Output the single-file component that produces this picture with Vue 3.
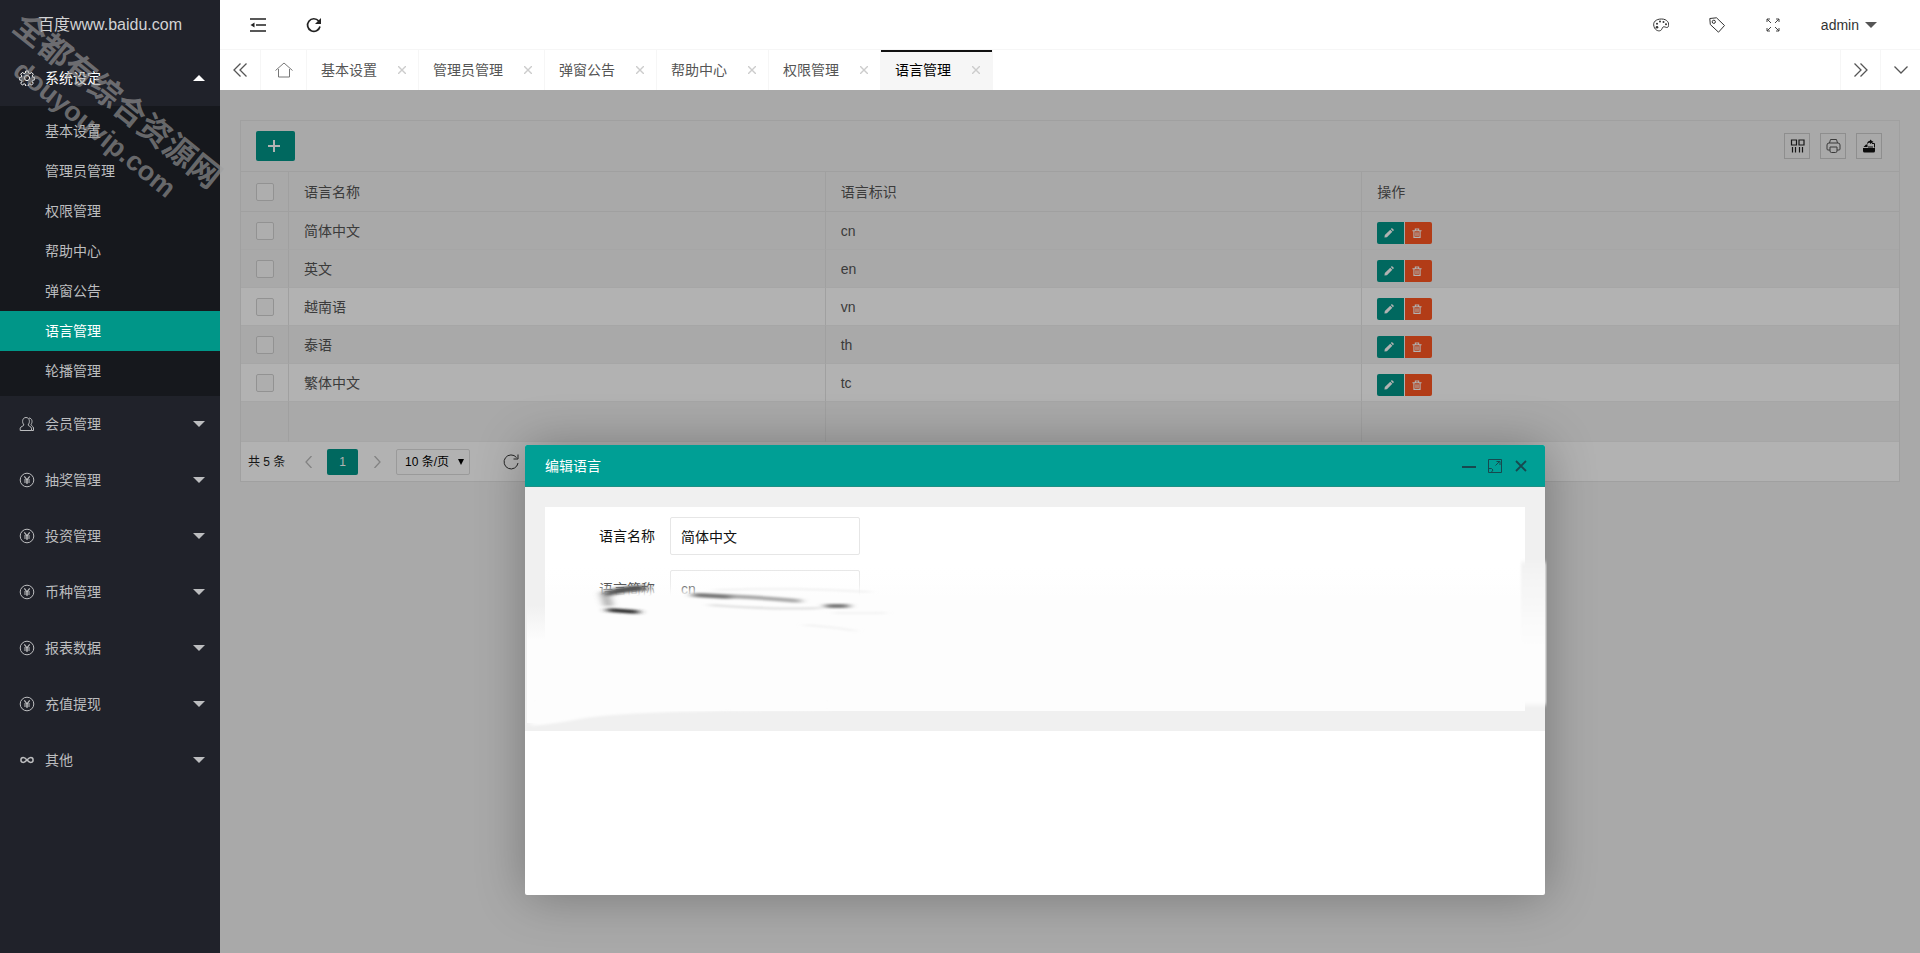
<script setup>
import { ref } from 'vue'

const subMenu = ['基本设置', '管理员管理', '权限管理', '帮助中心', '弹窗公告', '语言管理', '轮播管理']
const groups = [
  { name: '会员管理', icon: 'user' },
  { name: '抽奖管理', icon: 'yen' },
  { name: '投资管理', icon: 'yen' },
  { name: '币种管理', icon: 'yen' },
  { name: '报表数据', icon: 'yen' },
  { name: '充值提现', icon: 'yen' },
  { name: '其他', icon: 'link' },
]
const tabs = ['基本设置', '管理员管理', '弹窗公告', '帮助中心', '权限管理', '语言管理']
const rows = [
  { name: '简体中文', code: 'cn', shaded: true },
  { name: '英文', code: 'en', shaded: true },
  { name: '越南语', code: 'vn', shaded: false },
  { name: '泰语', code: 'th', shaded: true },
  { name: '繁体中文', code: 'tc', shaded: false },
]
const current = '语言管理'
const form = ref({ name: '简体中文', code: 'cn' })
</script>

<template>
  <div class="app">
    <aside class="side">
      <div class="logo">百度www.baidu.com</div>
      <nav>
        <a href="#" class="group open">
          <svg class="gicon" viewBox="0 0 16 16" fill="none" stroke="currentColor">
            <circle cx="8" cy="8" r="2.6" />
            <path d="M6.8 1h2.4l.4 2 1.3.6 1.8-1.1 1.6 1.7-1.1 1.7.5 1.3 2 .4v2.2l-2 .5-.5 1.3 1.1 1.7-1.6 1.6-1.8-1.1-1.3.5-.4 2H6.8l-.4-2-1.3-.5-1.8 1.1-1.6-1.6 1.1-1.7-.5-1.3-2-.5V7.6l2-.4.5-1.3-1.1-1.7 1.6-1.7 1.8 1.1L6.400 3z" />
          </svg>
          <span>系统设定</span><i class="caret up"></i>
        </a>
        <div class="sub">
          <a v-for="s in subMenu" :key="s" href="#" :class="{ on: s === current }">{{ s }}</a>
        </div>
        <a v-for="g in groups" :key="g.name" href="#" class="group">
          <svg v-if="g.icon === 'user'" class="gicon" viewBox="0 0 16 16" fill="none" stroke="currentColor">
            <path d="M5 9C2.700 6.500 3.200 1.500 7 1.500S11.300 6.500 9 9c.2 1 3.300 1.500 3.500 3.200V14.500H1.200v-2.300C1.500 10.500 4.800 10 5 9z" />
            <path d="M10 2c3.300.2 3.800 4 2 6.700.3 1.200 2.300 1.500 2.500 3.300v2.500h-2" />
          </svg>
          <svg v-else-if="g.icon === 'yen'" class="gicon" viewBox="0 0 16 16" fill="none" stroke="currentColor">
            <circle cx="8" cy="8" r="6.800" />
            <path stroke-width="1.200" d="M5.300 4.300L8 7.800l2.700-3.500M8 7.800V12M5 8h6M5 10h6" />
          </svg>
          <svg v-else class="gicon" viewBox="0 0 16 16" fill="none" stroke="currentColor" stroke-width="1.500">
            <path d="M8 8C6.300 6 5.300 5.600 4.300 5.600a2.400 2.400 0 0 0 0 4.800c1.200 0 2.300-.9 3.700-2.400s2.400-2.400 3.700-2.400a2.400 2.400 0 0 1 0 4.800C10.600 10.400 9.700 10 8 8z" />
          </svg>
          <span>{{ g.name }}</span><i class="caret"></i>
        </a>
      </nav>
      <div class="mark"><span class="mark-cn">全都有综合资源网</span><span class="mark-url">douyouvip.com</span></div>
    </aside>

    <div class="main">
      <header class="top">
        <button class="nav-btn" aria-label="收起菜单">
          <svg viewBox="0 0 16 16" fill="none" stroke="#222" stroke-width="1.500">
            <path d="M0 2h16M6 8h10M0 14h16" /><path d="M4.500 5.500v5L.5 8z" fill="#222" stroke="none" />
          </svg>
        </button>
        <button class="nav-btn" aria-label="刷新">
          <svg viewBox="0 0 16 16" fill="none" stroke="#222" stroke-width="1.700">
            <path d="M14 9.500A6.300 6.300 0 1 1 12.700 4" /><path d="M15 1v6H9z" fill="#222" stroke="none" />
          </svg>
        </button>
        <span class="grow"></span>
        <button class="nav-btn" aria-label="主题">
          <svg viewBox="0 0 16 16" fill="none" stroke="#333">
            <path d="M1 9.500C-.5 5 3 2 8.500 2S17 6 15.200 9.800c-1 1.500-2.500.2-4 0-2-.2-1.700 1.500-2.700 2.900C6.500 15.200 2 13.500 1 9.500z" />
            <g fill="#333" stroke="none"><circle cx="4" cy="10.300" r="1.300" /><circle cx="4" cy="6.800" r="1" /><circle cx="7" cy="4.600" r="1" /><circle cx="10.500" cy="5" r="1" /><circle cx="13" cy="7.200" r="1" /></g>
          </svg>
        </button>
        <button class="nav-btn" aria-label="便签">
          <svg viewBox="0 0 16 16" fill="none" stroke="#333">
            <path d="M.8 1.500L7.500.8l8 7.700-6 6.700L1.300 7.500z" /><circle cx="4.800" cy="4.800" r="1.600" />
          </svg>
        </button>
        <button class="nav-btn" aria-label="全屏">
          <svg viewBox="0 0 16 16" fill="none" stroke="#444">
            <path d="M6 6L2 2M10 6l4-4M6 10l-4 4M10 10l4 4M2 5V2h3M11 2h3v3M2 11v3h3M14 11v3h-3" />
          </svg>
        </button>
        <button class="user">admin<i class="caret"></i></button>
      </header>

      <div class="tabs">
        <button class="ctl" aria-label="向左">
          <svg viewBox="0 0 16 16" fill="none" stroke="#555" stroke-width="1.300"><path d="M8.500 1.500L2 8l6.500 6.500M14.500 1.500L8 8l6.500 6.500" /></svg>
        </button>
        <button class="home" aria-label="主页">
          <svg viewBox="0 0 18 16" fill="none" stroke="#777"><path d="M.5 8.500L9 1l8.500 7.500M3.500 7v8h11V7" /></svg>
        </button>
        <div v-for="t in tabs" :key="t" class="tab" :class="{ on: t === current }">
          <a href="#">{{ t }}</a>
          <button :aria-label="'关闭' + t"><svg viewBox="0 0 8 8" fill="none" stroke="#ccc" stroke-width="1.400"><path d="M0 0l8 8M8 0L0 8" /></svg></button>
        </div>
        <span class="grow"></span>
        <button class="ctl r" aria-label="向右">
          <svg viewBox="0 0 16 16" fill="none" stroke="#555" stroke-width="1.300"><path d="M1.500 1.500L8 8l-6.500 6.500M7.500 1.500L14 8l-6.500 6.500" /></svg>
        </button>
        <button class="ctl r" aria-label="更多">
          <svg viewBox="0 0 16 16" fill="none" stroke="#555" stroke-width="1.300"><path d="M1.500 4.500L8 11l6.500-6.500" /></svg>
        </button>
      </div>

      <main class="body">
        <section class="card">
          <div class="bar">
            <button class="add" aria-label="添加">
              <svg viewBox="0 0 12 12" stroke="#fff" stroke-width="2"><path d="M6 0v12M0 6h12" /></svg>
            </button>
            <span class="grow"></span>
            <button class="tool" aria-label="筛选列">
              <svg viewBox="0 0 16 16" fill="none" stroke="#222" stroke-width="1.200"><path d="M2.500 2h5v5h-5zM10 2h5v5h-5zM3.500 9v5.500M6.500 9v5.500M10.500 9v5.500M13.500 9v5.500" /></svg>
            </button>
            <button class="tool" aria-label="打印">
              <svg viewBox="0 0 16 16" fill="none" stroke="#555"><path d="M4.500 5l1-3.500h6l1 3.500M5 12H3q-1 0-1-1V7q0-2 2-2h9q2 0 2 2v4q0 1-1 1h-2M5 9h7v4q0 1.500-1.500 1.500h-4Q5 14.500 5 13z" /></svg>
            </button>
            <button class="tool" aria-label="导出">
              <svg viewBox="0 0 16 16"><path d="M2 10h12v3q0 1.500-1.500 1.500h-9Q2 14.500 2 13zM2.500 9L5 6.500h1.500V9zM9 1.500L12.500 4 9 6V4.800C8 4.800 7 5 6 6.500 6 4 7.500 2.800 9 2.800z" fill="#111" /><path d="M13.500 9.500V5.500h-2.500M7 9h5" fill="none" stroke="#111" /></svg>
            </button>
          </div>

          <table>
            <colgroup><col class="ck"><col><col><col></colgroup>
            <thead>
              <tr>
                <th><input type="checkbox" aria-label="全选"></th>
                <th>语言名称</th><th>语言标识</th><th>操作</th>
              </tr>
            </thead>
            <tbody>
              <tr v-for="r in rows" :key="r.code" :class="{ shaded: r.shaded }">
                <td><input type="checkbox" :aria-label="'选择' + r.name"></td>
                <td>{{ r.name }}</td>
                <td>{{ r.code }}</td>
                <td>
                  <div class="acts">
                    <button class="edit" aria-label="编辑"><svg viewBox="0 0 12 12"><path d="M.5 11.500l.5-3L7.500 2 10 4.500 3.500 11zM8.200 1.300L9.500 0 12 2.500l-1.300 1.300z" fill="#fff" /></svg></button>
                    <button class="del" aria-label="删除"><svg viewBox="0 0 12 12" fill="none" stroke="#fff" stroke-width="1.300"><path d="M.5 3.200h11M4 3V1.200h4V3M2.300 3.500v7.700h7.400V3.500M4.800 5v4.500M7.200 5v4.500" /></svg></button>
                  </div>
                </td>
              </tr>
              <tr class="shaded blank"><td></td><td></td><td></td><td></td></tr>
            </tbody>
          </table>

          <div class="pager">
            <span class="total">共 5 条</span>
            <button class="pg" aria-label="上一页"><svg viewBox="0 0 12 12" fill="none" stroke="#bbb" stroke-width="1.300"><path d="M8.500 0L3 6l5.500 6" /></svg></button>
            <button class="pg cur">1</button>
            <button class="pg" aria-label="下一页"><svg viewBox="0 0 12 12" fill="none" stroke="#bbb" stroke-width="1.300"><path d="M3.500 0L9 6l-5.500 6" /></svg></button>
            <div class="size">
              <select aria-label="每页条数"><option>10 条/页</option></select>
              <i></i>
            </div>
            <button class="reload" aria-label="刷新列表"><svg viewBox="0 0 16 16" fill="none" stroke="#333"><path d="M15 9A7 7 0 1 1 13.500 3.500M15 .5V5h-4.500" /></svg></button>
          </div>
        </section>

        <div class="shade"></div>

        <div class="dialog" role="dialog" aria-label="编辑语言">
          <div class="dhead">
            <span>编辑语言</span>
            <button aria-label="最小化"><svg viewBox="0 0 14 14"><path d="M0 8h14" stroke-width="2" /></svg></button>
            <button aria-label="最大化"><svg viewBox="0 0 14 14" fill="none"><path d="M7 .5H.5V7M.5 13.500h13V.5H7M7.500 6.500L12 2M8.500 2.500H12V6M.5 7v6.500M1 9.500h2.500L5 11l-1.500 2" /></svg></button>
            <button aria-label="关闭"><svg viewBox="0 0 14 14"><path d="M2 2l10 10M12 2L2 12" stroke-width="1.800" /></svg></button>
          </div>
          <form class="dbody" @submit.prevent>
            <div class="panel">
              <div class="field"><label for="f-name">语言名称</label><input id="f-name" v-model="form.name" type="text"></div>
              <div class="field"><label for="f-code">语言简称</label><input id="f-code" v-model="form.code" type="text"></div>
            </div>
          </form>
          <svg class="smear" viewBox="0 0 1022 450" aria-hidden="true">
            <defs>
              <linearGradient id="gMid" gradientUnits="userSpaceOnUse" x1="0" y1="122" x2="0" y2="151">
                <stop offset="0" stop-color="#fdfdfd" stop-opacity="0" />
                <stop offset=".6" stop-color="#fdfdfd" stop-opacity=".3" />
                <stop offset="1" stop-color="#fdfdfd" />
              </linearGradient>
              <linearGradient id="gLeft" gradientUnits="userSpaceOnUse" x1="0" y1="160" x2="0" y2="195">
                <stop offset="0" stop-color="#fdfdfd" stop-opacity="0" /><stop offset="1" stop-color="#fdfdfd" />
              </linearGradient>
              <linearGradient id="gRight" gradientUnits="userSpaceOnUse" x1="0" y1="117" x2="0" y2="200">
                <stop offset="0" stop-color="#f2f2f2" /><stop offset="1" stop-color="#fdfdfd" />
              </linearGradient>
              <filter id="b1" x="-20%" y="-200%" width="140%" height="500%"><feGaussianBlur stdDeviation="4 1" /></filter>
              <filter id="b2" x="-20%" y="-50%" width="140%" height="200%"><feGaussianBlur stdDeviation="3 1" /></filter>
              <filter id="b3" x="-20%" y="-10%" width="140%" height="120%"><feGaussianBlur stdDeviation="1 2" /></filter>
            </defs>
            <path fill="url(#gMid)" d="M20 122h980v144H20z" />
            <path fill="url(#gLeft)" d="M2 160h19v118H2z" />
            <path fill="url(#gRight)" filter="url(#b3)" d="M996 117h25v143h-25z" />
            <path fill="#fdfdfd" filter="url(#b2)" d="M6 255h300v10Q110 265 60 273 30 279 6 281z" />
            <g filter="url(#b1)" fill="none" stroke-linecap="round">
              <path d="M82 149q12-5 36-6" stroke="#555" stroke-width="6" />
              <path d="M80 149l3 10" stroke="#777" stroke-width="5" />
              <path d="M84 165l28 2" stroke="#333" stroke-width="4" />
              <path d="M169 150q50 1 105 6" stroke="#aaa" stroke-width="4" />
              <path d="M170 150l34 2" stroke="#777" stroke-width="4" />
              <path d="M185 160q70 5 110 3" stroke="#ddd" stroke-width="2" />
              <path d="M302 161h20" stroke="#777" stroke-width="4" />
              <path d="M190 145q80-3 155 2M310 168h50M280 180q30 2 50 6" stroke="#e6e6e6" stroke-width="1" />
            </g>
          </svg>
        </div>
      </main>
    </div>
  </div>
</template>

<style>
body { margin: 0; }
</style>

<style scoped>
.app {
  display: flex;
  min-height: 100vh;
  font: 14px/24px "Liberation Sans", "Noto Sans CJK SC", sans-serif;
  color: #333;
}
* { box-sizing: border-box; }
a { color: inherit; text-decoration: none; }
button {
  display: flex;
  align-items: center;
  justify-content: center;
  border: 0;
  padding: 0;
  background: none;
  font: inherit;
  color: inherit;
  cursor: pointer;
}
svg { display: block; flex: none; }
.grow { flex: 1; }
.caret {
  border: 6px solid transparent;
  border-top-color: currentColor;
  border-bottom-width: 0;
}
.caret.up { border-width: 0 6px 6px; border-bottom-color: currentColor; }

.side { width: 220px; flex: none; background: #20222a; color: #bcbdbf; position: relative; z-index: 2; }
.logo { height: 50px; line-height: 50px; text-align: center; font-size: 16px; color: #d2d3d4; }
.group { display: flex; align-items: center; height: 56px; padding: 0 15px 0 19px; }
.group span { flex: 1; }
.group.open { color: #fff; }
.gicon { width: 16px; height: 16px; margin-right: 10px; }
.sub { background: #16181d; padding: 5px 0; }
.sub a { display: block; height: 40px; line-height: 40px; padding-left: 45px; }
.sub a.on { background: #009688; color: #fff; }
.mark {
  position: absolute;
  left: 106px;
  top: 115px;
  display: flex;
  flex-direction: column;
  align-items: center;
  transform: translate(-50%, -50%) rotate(39deg);
  white-space: nowrap;
  line-height: 36px;
  font-weight: bold;
  color: rgba(160, 160, 160, .6);
  pointer-events: none;
}
.mark-cn { font-size: 32px; }
.mark-url { font-size: 27px; }

.main { flex: 1; min-width: 0; display: flex; flex-direction: column; }
.top { height: 50px; display: flex; padding: 1px 28px 0 10px; background: #fff; border-bottom: 1px solid #f6f6f6; }
.nav-btn { width: 56px; }
.nav-btn svg { width: 16px; height: 16px; }
.user { padding: 0 15px 0 20px; gap: 6px; }
.user .caret { color: #555; }

.tabs { height: 40px; display: flex; background: #fff; }
.ctl { width: 41px; border-right: 1px solid #f6f6f6; }
.ctl.r { width: 40px; border-right: 0; border-left: 1px solid #f6f6f6; }
.ctl svg { width: 16px; height: 16px; }
.home { width: 46px; border-right: 1px solid #f6f6f6; }
.home svg { width: 18px; height: 16px; }
.tab {
  display: flex;
  align-items: center;
  gap: 16px;
  padding: 0 8px 0 14px;
  border-right: 1px solid #f6f6f6;
  color: #555;
}
.tab button { width: 17px; height: 16px; }
.tab svg { width: 8px; height: 8px; }
.tab.on { background: #f6f6f6; color: #000; box-shadow: inset 0 2px #111; }

.body { flex: 1; position: relative; padding: 30px 20px; background: #f2f2f2; }
.shade { position: absolute; inset: 0; background: rgba(0, 0, 0, .3); }
.card { background: #fff; border: 1px solid #e6e6e6; }
.bar { display: flex; align-items: center; gap: 10px; height: 50px; padding: 0 17px 0 15px; background: #f2f2f2; }
.add { width: 39px; height: 30px; padding-right: 3px; background: #009688; border-radius: 2px; }
.add svg { width: 12px; height: 12px; }
.tool { width: 26px; height: 26px; border: 1px solid #ccc; }
.tool svg { width: 16px; height: 16px; }

table { width: 100%; table-layout: fixed; border-collapse: separate; border-spacing: 0; }
.ck { width: 48px; }
th, td {
  height: 38px;
  padding: 0 15px;
  text-align: left;
  font-weight: normal;
  color: #555;
  border-right: 1px solid #e6e6e6;
}
td:last-child, th:last-child { border-right: 0; }
th { height: 41px; background: #f2f2f2; border-top: 1px solid #e6e6e6; border-bottom: 1px solid #e6e6e6; }
td { border-bottom: 1px solid #eee; }
.shaded td { background: #f2f2f2; }
.blank td { height: 40px; }
input[type="checkbox"] {
  appearance: none;
  display: block;
  width: 18px;
  height: 18px;
  margin: 0;
  background: #fafafa;
  border: 1px solid #d2d2d2;
  border-radius: 2px;
}
.acts { display: flex; gap: 1px; padding-top: 4px; }
.acts button { width: 27px; height: 22px; padding-right: 3px; border-radius: 2px 0 0 2px; }
.acts .edit { background: #009688; }
.acts .del { background: #ff5722; border-radius: 0 2px 2px 0; }
.acts svg { width: 10px; height: 10px; }

.pager { display: flex; align-items: center; height: 39px; padding: 0 7px; font-size: 12px; }
.total { width: 42px; color: #222; }
.pg { width: 37px; height: 26px; }
.pg svg { width: 12px; height: 12px; }
.pg.cur { width: 31px; background: #009688; color: #fff; border-radius: 2px; }
.size { position: relative; margin: 0 33px 0 1px; }
.size select {
  appearance: none;
  display: block;
  width: 74px;
  height: 26px;
  padding: 0 8px;
  border: 1px solid #ddd;
  border-radius: 2px;
  background: #fff;
  font: inherit;
  color: #000;
}
.size i {
  position: absolute;
  right: 6px;
  top: 10px;
  border: 3px solid transparent;
  border-top: 6px solid #000;
  border-bottom: 0;
}
.reload svg { width: 16px; height: 16px; }

.dialog {
  position: absolute;
  left: 305px;
  top: 355px;
  width: 60%;
  height: 450px;
  background: #fff;
  border-radius: 2px;
  box-shadow: 1px 1px 50px rgba(0, 0, 0, .3);
}
.dhead {
  display: flex;
  align-items: center;
  gap: 12px;
  height: 42px;
  padding: 0 17px 0 20px;
  background: #009f95;
  border-bottom: 1px solid #1f9085;
  border-radius: 2px 2px 0 0;
  color: #fff;
}
.dhead span { flex: 1; }
.dhead svg { width: 14px; height: 14px; stroke: #17494f; }
.dbody { padding: 20px; background: #f0f0f0; }
.panel { height: 204px; padding: 10px 15px; background: #fff; }
.field { display: flex; margin-bottom: 15px; color: #111; }
.field label { width: 110px; padding-right: 15px; line-height: 38px; text-align: right; }
.field input {
  width: 190px;
  height: 38px;
  padding: 0 10px;
  border: 1px solid #e6e6e6;
  border-radius: 2px;
  background: #fff;
  font: inherit;
  color: #111;
}
.smear { position: absolute; left: 0; top: 0; width: calc(100% + 2px); height: auto; pointer-events: none; }
</style>
